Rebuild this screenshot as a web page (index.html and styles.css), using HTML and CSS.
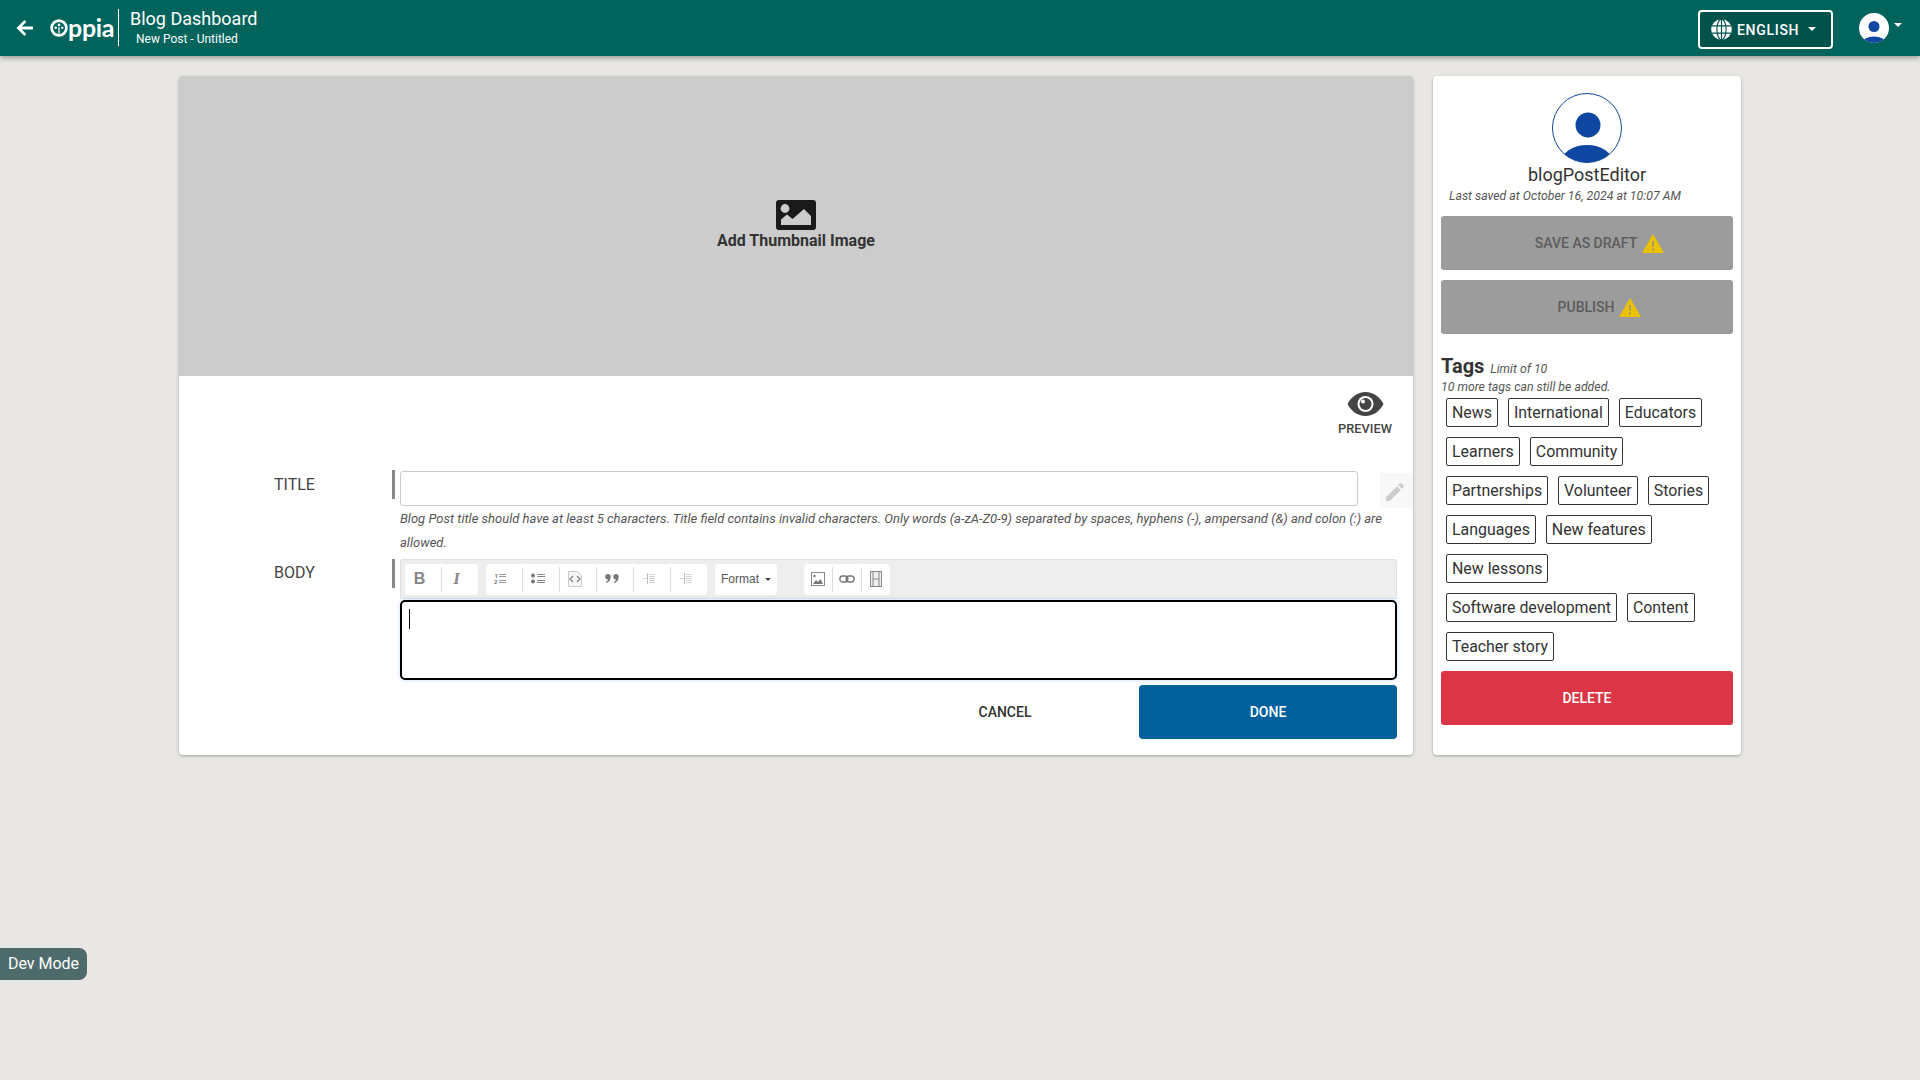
FILE: index.html
```html
<!DOCTYPE html>
<html lang="en">
<head>
  <meta charset="UTF-8">
  <title>Blog Dashboard</title>
  <link rel="stylesheet" href="styles.css">
</head>
<body>

<header class="navbar">
  <svg class="back-icon" viewBox="0 0 24 24"><path d="M20 10.500H8.700l4.600-4.600L11.500 4 3.500 12l8 8 1.800-1.900-4.600-4.600H20z"/></svg>
  <div class="logo">
    <svg class="logo-o" viewBox="0 0 20 20">
      <circle cx="10" cy="10" r="8.200" fill="none" stroke="#fff" stroke-width="3"/>
      <circle cx="10" cy="6.600" r="1.500" fill="#fff"/>
      <circle cx="6.400" cy="9.800" r="1.400" fill="#fff"/>
      <circle cx="13.600" cy="9.800" r="1.400" fill="#fff"/>
      <rect x="9.300" y="9" width="1.400" height="7" fill="#fff"/>
    </svg><span>ppia</span>
  </div>
  <div class="nav-title">
    <div class="nav-main">Blog Dashboard</div>
    <div class="nav-sub">New Post - Untitled</div>
  </div>
  <button class="lang-btn">
    <svg class="globe" viewBox="0 0 20 20">
      <circle cx="10" cy="10" r="9.800" fill="#fff"/>
      <g fill="none" stroke="#00524b" stroke-width="1.100">
        <ellipse cx="10" cy="10" rx="4.400" ry="9.800"/>
        <path d="M10 .2v19.600M1 6.600h18M1 13.400h18"/>
      </g>
    </svg>
    <span class="lang-text">ENGLISH</span>
    <span class="caret"></span>
  </button>
  <div class="user-menu">
    <svg class="user-pic" viewBox="0 0 30 30">
      <defs><clipPath id="navClip"><circle cx="15" cy="15" r="15"/></clipPath></defs>
      <circle cx="15" cy="15" r="15" fill="#fff"/>
      <circle cx="15" cy="13.500" r="5.500" fill="#0d47a1"/>
      <ellipse cx="15" cy="30" rx="12" ry="6.500" fill="#0d47a1" clip-path="url(#navClip)"/>
    </svg>
    <span class="caret"></span>
  </div>
</header>

<main class="page">
  <section class="card editor-card">
    <div class="thumbnail">
      <svg class="thumb-icon" viewBox="0 0 40 30">
        <rect width="40" height="30" rx="3" fill="#1a1a1a"/>
        <circle cx="9" cy="8.500" r="4.400" fill="#ccc"/>
        <path d="M5 25v-5.500l6-5 5.500 4.500L28 9l7 7v9z" fill="#ccc"/>
      </svg>
      <div class="thumb-label">Add Thumbnail Image</div>
    </div>

    <div class="preview">
      <svg class="eye" viewBox="0 0 36 24">
        <path d="M18 0C10 0 3.500 5 0 12c3.500 7 10 12 18 12s14.500-5 18-12C32.500 5 26 0 18 0z" fill="#444"/>
        <circle cx="18" cy="12" r="8" fill="#fff"/>
        <circle cx="18" cy="12" r="6" fill="#444"/>
        <circle cx="15.500" cy="9.500" r="2" fill="#fff"/>
      </svg>
      <div class="preview-label">PREVIEW</div>
    </div>

    <div class="field title-field">
      <label class="field-label">TITLE</label>
      <span class="field-bar"></span>
      <div class="field-body">
        <div class="title-row">
          <div class="title-input"></div>
          <div class="pencil">
            <svg viewBox="0 0 24 24"><path d="M3 17.250V21h3.750L17.800 9.940l-3.750-3.750L3 17.250zM20.700 7.040a1 1 0 0 0 0-1.410l-2.340-2.340a1 1 0 0 0-1.410 0l-1.830 1.830 3.750 3.750 1.830-1.830z"/></svg>
          </div>
        </div>
        <p class="hint">Blog Post title should have at least 5 characters. Title field contains invalid characters. Only words (a-zA-Z0-9) separated by spaces, hyphens (-), ampersand (&amp;) and colon (:) are allowed.</p>
      </div>
    </div>

    <div class="field body-field">
      <label class="field-label">BODY</label>
      <span class="field-bar"></span>
      <div class="field-body">
        <div class="toolbar">
          <div class="tool-group">
            <span class="tool tool-b">B</span>
            <span class="tool tool-i">I</span>
          </div>
          <div class="tool-group">
            <span class="tool"><svg viewBox="0 0 16 16"><path d="M6 3.500h7M6 5.500h7M6 9.500h7M6 11.500h7" stroke="#999" fill="none"/><text x="1.500" y="6.500" class="mini">1</text><text x="1" y="13" class="mini">2</text></svg></span>
            <span class="tool"><svg viewBox="0 0 16 16"><circle cx="3" cy="4.500" r="2" fill="#777"/><circle cx="3" cy="10.500" r="2" fill="#777"/><path d="M7 3.500h8M7 5.500h8M7 9.500h8M7 11.500h8" stroke="#888" fill="none"/></svg></span>
            <span class="tool"><svg viewBox="0 0 16 16"><path d="M1.500.5h9l4 4v11h-13z" fill="#f6f6f6" stroke="#ccc"/><path d="M6 5L3 8l3 3M10 5l3 3-3 3" stroke="#888" stroke-width="1.300" fill="none"/></svg></span>
            <span class="tool"><svg viewBox="0 0 16 16"><path d="M4 3a2.700 2.700 0 0 1 2.700 2.700c0 3-1.500 5.300-4.200 6.300l-.6-1c1.300-.7 2-1.500 2.200-2.400A2.700 2.700 0 0 1 4 3zM12 3a2.700 2.700 0 0 1 2.700 2.700c0 3-1.500 5.300-4.200 6.300l-.6-1c1.300-.7 2-1.500 2.200-2.400A2.700 2.700 0 0 1 12 3z" fill="#777"/></svg></span>
            <span class="tool"><svg viewBox="0 0 16 16"><path d="M8 3.500h6M8 5.500h6M8 7.500h6M8 9.500h6M8 11.500h6M2 7.500h4" stroke="#d4d4d4" fill="none"/><path d="M6.500 2v11" stroke="#c0c0c0" fill="none"/></svg></span>
            <span class="tool"><svg viewBox="0 0 16 16"><path d="M8 3.500h6M8 5.500h6M8 7.500h6M8 9.500h6M8 11.500h6M2 7.500h4" stroke="#d4d4d4" fill="none"/><path d="M6.500 2v11" stroke="#c0c0c0" fill="none"/></svg></span>
          </div>
          <div class="tool-group format-group">Format <span class="caret caret-dark"></span></div>
          <div class="tool-group insert-group">
            <span class="tool"><svg viewBox="0 0 16 16"><rect x="1.500" y="1.500" width="13" height="13" fill="#fff" stroke="#888"/><circle cx="4.500" cy="5" r="1.200" fill="#777"/><path d="M3 13l3-4 2 2 2.500-3 2.500 5z" fill="#777"/></svg></span>
            <span class="tool"><svg viewBox="0 0 16 16"><rect x=".8" y="5" width="8" height="6" rx="3" fill="none" stroke="#777" stroke-width="1.400"/><rect x="7.200" y="5" width="8" height="6" rx="3" fill="none" stroke="#777" stroke-width="1.400"/></svg></span>
            <span class="tool"><svg viewBox="0 0 16 16"><rect x="2.500" y=".5" width="11" height="15" fill="#eee" stroke="#888"/><path d="M5 .5v15M11 .5v15M5 8h6" stroke="#888" fill="none"/></svg></span>
          </div>
        </div>
        <div class="editor"><span class="cursor"></span></div>
        <div class="actions">
          <button class="cancel-btn">CANCEL</button>
          <button class="done-btn">DONE</button>
        </div>
      </div>
    </div>
  </section>

  <aside class="card side-card">
    <svg class="profile-pic" viewBox="0 0 70 70">
      <defs><clipPath id="sideClip"><circle cx="35" cy="35" r="34.500"/></clipPath></defs>
      <circle cx="35" cy="35" r="34.500" fill="#fff" stroke="#0d47a1"/>
      <circle cx="36" cy="32" r="12.500" fill="#0d47a1"/>
      <ellipse cx="35" cy="70" rx="26" ry="18" fill="#0d47a1" clip-path="url(#sideClip)"/>
    </svg>
    <div class="username">blogPostEditor</div>
    <div class="saved">Last saved at October 16, 2024 at 10:07 AM</div>
    <button class="side-btn">SAVE AS DRAFT <svg class="warn" viewBox="0 0 22 20"><path d="M11 0l11 19H0z" fill="#ecc100"/><path d="M10 7h2v6h-2zM10 14.500h2v2h-2z" fill="#a8a06a"/></svg></button>
    <button class="side-btn">PUBLISH <svg class="warn" viewBox="0 0 22 20"><path d="M11 0l11 19H0z" fill="#ecc100"/><path d="M10 7h2v6h-2zM10 14.500h2v2h-2z" fill="#a8a06a"/></svg></button>
    <div class="tags-head"><span class="tags-title">Tags</span> <span class="tags-note">Limit of 10</span></div>
    <div class="tags-left">10 more tags can still be added.</div>
    <div class="tag-list">
      <span class="tag">News</span>
      <span class="tag">International</span>
      <span class="tag">Educators</span>
      <span class="tag">Learners</span>
      <span class="tag">Community</span>
      <span class="tag">Partnerships</span>
      <span class="tag">Volunteer</span>
      <span class="tag">Stories</span>
      <span class="tag">Languages</span>
      <span class="tag">New features</span>
      <span class="tag">New lessons</span>
      <span class="tag">Software development</span>
      <span class="tag">Content</span>
      <span class="tag">Teacher story</span>
    </div>
    <button class="delete-btn">DELETE</button>
  </aside>
</main>

<div class="dev-mode">Dev Mode</div>

</body>
</html>
```

FILE: styles.css
```css
* {
  box-sizing: border-box;
}
body {
  margin: 0;
  height: 1080px;
  overflow: hidden;
  background: #e8e7e3;
  font-family: Roboto, sans-serif;
  color: #333;
}
button {
  font-family: Roboto, sans-serif;
  border: none;
}

/* navbar */
.navbar {
  height: 56px;
  background: #00645c;
  box-shadow: 0 2px 5px rgba(0, 0, 0, 0.35);
  display: flex;
  align-items: center;
  color: #fff;
}
.back-icon {
  width: 24px;
  height: 24px;
  margin-left: 13px;
  fill: #fff;
}
.logo {
  display: flex;
  align-items: center;
  margin-left: 13px;
  width: 68px;
  font-family: Lato, sans-serif;
  font-size: 25px;
  font-weight: 700;
  height: 36px;
}
.logo-o {
  width: 18px;
  height: 18px;
  margin-top: -1px;
  flex: none;
}
.logo span {
  margin-top: -2px;
  letter-spacing: -0.3px;
}
.nav-title {
  border-left: 1px solid #fff;
  padding-left: 11px;
  height: 37px;
  margin-top: -1px;
}
.nav-main {
  font-size: 18px;
  line-height: 20px;
}
.nav-sub {
  font-size: 12px;
  line-height: 16px;
  margin-left: 6px;
  margin-top: 2px;
}
.lang-btn {
  margin-left: auto;
  margin-top: 2px;
  width: 135px;
  height: 39px;
  background: #00524b;
  border: 2px solid #fff;
  border-radius: 4px;
  color: #fff;
  font-size: 14px;
  font-weight: 500;
  letter-spacing: 0.7px;
  display: flex;
  align-items: center;
  padding: 0 11px;
}
.lang-text {
  padding-top: 1px;
}
.globe {
  width: 21px;
  height: 21px;
  margin-right: 5px;
  flex: none;
}
.caret {
  display: inline-block;
  border-top: 4px solid #fff;
  border-left: 4px solid transparent;
  border-right: 4px solid transparent;
}
.lang-btn .caret {
  margin-left: 9px;
}
.user-menu {
  display: flex;
  align-items: flex-start;
  width: 87px;
  padding-left: 26px;
}
.user-pic {
  width: 30px;
  height: 30px;
  margin-top: -1px;
}
.user-menu .caret {
  margin: 9px 0 0 5px;
}

/* cards */
.page {
  display: flex;
  gap: 20px;
  margin: 20px 0 0 179px;
  height: 679px;
}
.card {
  background: #fff;
  border-radius: 4px;
  box-shadow: 0 1px 3px rgba(0, 0, 0, 0.3);
}
.editor-card {
  width: 1234px;
  overflow: hidden;
}
.thumbnail {
  height: 300px;
  background: #ccc;
  display: flex;
  flex-direction: column;
  align-items: center;
  justify-content: center;
  padding-bottom: 2px;
}
.thumb-icon {
  width: 40px;
  height: 30px;
}
.thumb-label {
  font-size: 16px;
  font-weight: 700;
  line-height: 20px;
  margin-top: 1px;
}
.preview {
  width: 70px;
  margin: 16px 0 0 1151px;
  text-align: center;
}
.eye {
  width: 37px;
  height: 24px;
  display: block;
  margin: 0 auto;
}
.preview-label {
  font-size: 12.8px;
  font-weight: 500;
  line-height: 14px;
  margin-top: 6px;
  color: #444;
}

/* form */
.field {
  display: flex;
  padding-left: 95px;
}
.title-field {
  margin-top: 34px;
}
.body-field {
  margin-top: 4px;
}
.field-label {
  width: 119px;
  font-size: 16px;
  line-height: 20px;
  margin-top: 4px;
  color: #444;
}
.title-field .field-label {
  margin-top: 5px;
}
.field-bar {
  width: 3px;
  height: 29px;
  background: #888;
  margin: 0 5px 0 0;
  flex: none;
}
.field-body {
  width: 1013px;
  flex: none;
}
.title-row {
  display: flex;
  align-items: flex-start;
  margin-top: 1px;
}
.title-input {
  width: 958px;
  height: 35px;
  border: 1px solid #ccc;
  border-radius: 3px;
  flex: none;
}
.pencil {
  width: 33px;
  height: 35px;
  margin: 2px 0 0 22px;
  background: #f8f8f8;
  padding: 7px 3px;
  flex: none;
}
.pencil svg {
  display: block;
  width: 24px;
  height: 24px;
  fill: #ccc;
}
.hint {
  margin: -1px 0 0;
  width: 996px;
  font-size: 13px;
  font-style: italic;
  line-height: 24px;
  color: #555;
}
.toolbar {
  width: 997px;
  height: 40px;
  background: #eee;
  border: 1px solid #e0e0e0;
  border-bottom-color: #d4e4f4;
  border-radius: 3px 3px 0 0;
  display: flex;
  align-items: center;
  padding: 0 4px;
}
.tool-group {
  height: 31px;
  background: #fff;
  border-radius: 4px;
  display: flex;
  align-items: center;
  margin-right: 8px;
}
.tool {
  width: 37px;
  height: 25px;
  border-right: 1px solid #ddd;
  display: flex;
  align-items: center;
  justify-content: center;
  color: #888;
  padding-right: 7px;
}
.tool:last-child {
  border-right: none;
  width: 36px;
}
.tool svg {
  width: 16px;
  height: 16px;
  flex: none;
}
.mini {
  font-size: 6px;
  font-weight: 700;
  fill: #777;
  font-family: Roboto, sans-serif;
}
.tool-b {
  font: 700 16px "Liberation Sans", sans-serif;
}
.tool-i {
  font: italic 700 17px "Liberation Serif", serif;
}
.format-group {
  width: 62px;
  font: 12px "Liberation Sans", sans-serif;
  color: #555;
  padding-left: 6px;
  margin-right: 27px;
}
.caret-dark {
  border-top-color: #444;
  border-top-width: 3px;
  border-left-width: 3px;
  border-right-width: 3px;
  margin-left: 6px;
}
.insert-group .tool {
  width: 29px;
  padding-right: 0;
}
.insert-group .tool:last-child {
  width: 28px;
}
.editor {
  width: 997px;
  height: 80px;
  margin-top: 1px;
  border: 2px solid #000;
  border-radius: 5px;
  padding: 7px 7px;
  box-shadow: 0 0 4px rgba(120, 170, 220, 0.4);
}
.cursor {
  display: block;
  width: 1px;
  height: 20px;
  background: #000;
}
.actions {
  display: flex;
  justify-content: flex-end;
  width: 997px;
  margin-top: 5px;
}
.cancel-btn {
  width: 130px;
  height: 54px;
  background: none;
  color: #333;
  font-size: 14px;
  font-weight: 500;
  margin-right: 69px;
}
.done-btn {
  width: 258px;
  height: 54px;
  background: #00609c;
  color: #fff;
  font-size: 14px;
  font-weight: 500;
  border-radius: 4px;
}

/* sidebar */
.side-card {
  width: 308px;
  padding: 17px 8px 0;
}
.profile-pic {
  display: block;
  width: 70px;
  height: 70px;
  margin: 0 auto;
}
.username {
  text-align: center;
  font-size: 18px;
  line-height: 22px;
  margin-top: 1px;
}
.saved {
  font-size: 12.3px;
  font-style: italic;
  line-height: 16px;
  margin: 2px 0 0 8px;
  color: #555;
}
.side-btn {
  display: flex;
  align-items: center;
  justify-content: center;
  gap: 5px;
  width: 292px;
  height: 54px;
  margin-top: 10px;
  padding-left: 31px;
  background: #9c9c9c;
  color: #5c5c5c;
  border-radius: 3px;
  font-size: 14px;
  font-weight: 500;
}
.saved + .side-btn {
  margin-top: 12px;
}
.warn {
  width: 22px;
  height: 20px;
  margin-top: 2px;
}
.tags-head {
  margin-top: 21px;
  line-height: 22px;
}
.tags-title {
  font-size: 20px;
  font-weight: 700;
}
.tags-note {
  font-size: 12.3px;
  font-style: italic;
  color: #555;
  margin-left: 2px;
}
.tags-left {
  font-size: 12.3px;
  font-style: italic;
  line-height: 14px;
  color: #555;
}
.tag-list {
  display: flex;
  flex-wrap: wrap;
  gap: 10px 10px;
  margin: 4px 0 0 5px;
  width: 270px;
}
.tag {
  height: 29px;
  border: 1px solid #333;
  border-radius: 2px;
  padding: 0 5px;
  font-size: 15.9px;
  line-height: 27px;
  white-space: nowrap;
}
.delete-btn {
  display: block;
  width: 292px;
  height: 54px;
  margin-top: 10px;
  background: #dc3545;
  color: #fff;
  border-radius: 3px;
  font-size: 14px;
  font-weight: 500;
}

.dev-mode {
  position: fixed;
  left: 0;
  top: 948px;
  width: 87px;
  height: 32px;
  background: #4e6b6b;
  color: #fff;
  border-radius: 0 8px 8px 0;
  font-size: 16px;
  line-height: 32px;
  text-align: center;
}
```
